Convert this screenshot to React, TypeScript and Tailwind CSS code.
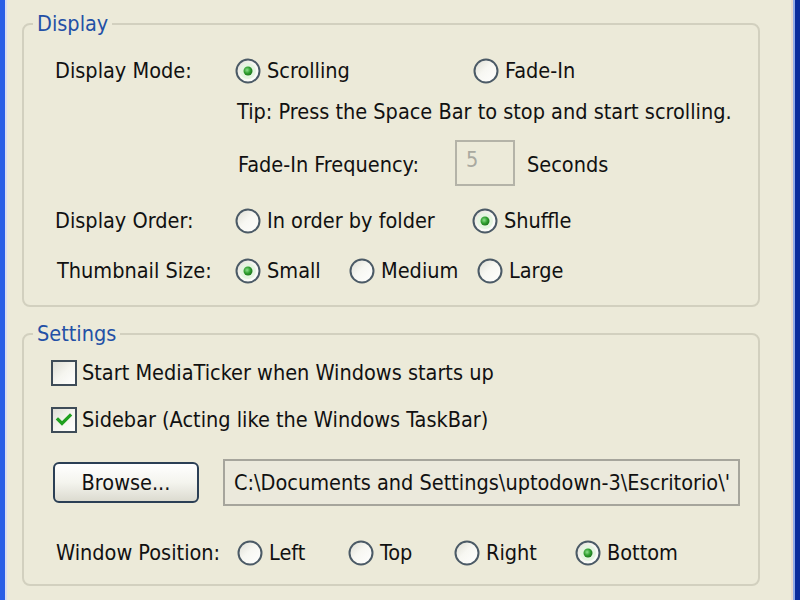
import React from "react"

const font = { fontFamily: "'DejaVu Sans Condensed', 'Liberation Sans', sans-serif" }

function Radio({ checked }: { checked?: boolean }) {
  return (
    <svg width="26" height="26" viewBox="0 0 26 26" className="shrink-0">
      <defs>
        <linearGradient id="rfill" x1="0" y1="0" x2="1" y2="1">
          <stop offset="0" stopColor="#dcdcd2" />
          <stop offset="0.45" stopColor="#f7f7f2" />
          <stop offset="1" stopColor="#ffffff" />
        </linearGradient>
        <radialGradient id="rdot" cx="0.4" cy="0.4" r="0.6">
          <stop offset="0" stopColor="#8ee08e" />
          <stop offset="0.6" stopColor="#2f9f2f" />
          <stop offset="1" stopColor="#1f7a1f" />
        </radialGradient>
      </defs>
      <circle cx="13" cy="13" r="11.5" fill="url(#rfill)" stroke="#4b5a66" strokeWidth="2" />
      {checked && (
        <>
          <circle cx="13" cy="13" r="8" fill="#e4f5e0" />
          <circle cx="13" cy="13" r="4.5" fill="url(#rdot)" />
        </>
      )}
    </svg>
  )
}

function Check({ checked }: { checked?: boolean }) {
  return (
    <svg width="26" height="26" viewBox="0 0 26 26" className="shrink-0">
      <defs>
        <linearGradient id="cfill" x1="0" y1="0" x2="1" y2="1">
          <stop offset="0" stopColor="#dcdcd2" />
          <stop offset="0.5" stopColor="#f5f5ef" />
          <stop offset="1" stopColor="#ffffff" />
        </linearGradient>
      </defs>
      <rect x="1" y="1" width="24" height="24" fill="url(#cfill)" stroke="#3e4c58" strokeWidth="2" />
      {checked && (
        <path d="M7 12.5 L11 16.5 L19 8.5" fill="none" stroke="#21a121" strokeWidth="3.2" strokeLinecap="square" />
      )}
    </svg>
  )
}

function Option({ label, checked, w }: { label: string; checked?: boolean; w: string }) {
  return (
    <div className={`flex items-center gap-[6px] ${w}`}>
      <Radio checked={checked} />
      <span>{label}</span>
    </div>
  )
}

export default function App() {
  return (
    <div style={font} className="w-[800px] h-[600px] flex bg-[#ecead9] text-[21.5px] leading-[24px] text-[#111] overflow-hidden">
      <div className="w-[5px] bg-[#2a5fe6]" />
      <div className="w-[2px] bg-[#d8def2]" />

      <div className="flex-1 pl-[15px] pt-[12px]">
        {/* Display */}
        <fieldset className="w-[738px] border-2 border-[#d2d0bf] rounded-[8px] pb-[19px]">
          <legend className="ml-[9px] px-1 text-[#2350a6]">Display</legend>

          <div className="flex items-center h-[30px] mt-[20px]">
            <span className="w-[211px] pl-[31px]">Display Mode:</span>
            <Option label="Scrolling" checked w="w-[238px]" />
            <Option label="Fade-In" w="w-[150px]" />
          </div>

          <div className="flex items-center h-[30px] mt-[11px] pl-[213px]">
            Tip: Press the Space Bar to stop and start scrolling.
          </div>

          <div className="flex items-center h-[46px] mt-[13px] pl-[214px]">
            <span className="w-[217px] pt-[3px]">Fade-In Frequency:</span>
            <div className="w-[60px] h-[46px] border-2 border-[#b4b3a8] px-[9px] pt-[6px] text-[#a9a9a0]">5</div>
            <span className="ml-[12px] pt-[3px]">Seconds</span>
          </div>

          <div className="flex items-center h-[30px] mt-[20px]">
            <span className="w-[211px] pl-[31px]">Display Order:</span>
            <Option label="In order by folder" w="w-[237px]" />
            <Option label="Shuffle" checked w="w-[150px]" />
          </div>

          <div className="flex items-center h-[30px] mt-[20px]">
            <span className="w-[211px] pl-[33px]">Thumbnail Size:</span>
            <Option label="Small" checked w="w-[114px]" />
            <Option label="Medium" w="w-[128px]" />
            <Option label="Large" w="w-[120px]" />
          </div>
        </fieldset>

        {/* Settings */}
        <fieldset className="w-[738px] mt-[15px] border-2 border-[#d2d0bf] rounded-[8px] pb-[16px]">
          <legend className="ml-[9px] px-1 text-[#2350a6]">Settings</legend>

          <div className="flex items-center gap-[5px] h-[30px] mt-[12px] pl-[27px]">
            <Check />
            <span>Start MediaTicker when Windows starts up</span>
          </div>

          <div className="flex items-center gap-[5px] h-[30px] mt-[17px] pl-[27px]">
            <Check checked />
            <span>Sidebar (Acting like the Windows TaskBar)</span>
          </div>

          <div className="flex items-center h-[47px] mt-[24px] pl-[29px]">
            <button className="w-[146px] h-[41px] rounded-[6px] border-2 border-[#2b3f55] bg-gradient-to-b from-[#ffffff] via-[#f4f4ee] to-[#dcdbd0] text-[#111]">
              Browse...
            </button>
            <div className="ml-[24px] w-[517px] h-[47px] border-2 border-[#a6a59c] bg-[#ebe9dc] flex items-center pl-[9px] whitespace-nowrap overflow-hidden">
              C:\Documents and Settings\uptodown-3\Escritorio\'
            </div>
          </div>

          <div className="flex items-center h-[30px] mt-[32px]">
            <span className="w-[213px] pl-[32px]">Window Position:</span>
            <Option label="Left" w="w-[111px]" />
            <Option label="Top" w="w-[106px]" />
            <Option label="Right" w="w-[121px]" />
            <Option label="Bottom" checked w="w-[120px]" />
          </div>
        </fieldset>
      </div>

      <div className="w-[2px] bg-[#e8d9d0]" />
      <div className="w-[2px] bg-[#8fa8e8]" />
      <div className="w-[5px] bg-[#0a2a9c]" />
    </div>
  )
}
